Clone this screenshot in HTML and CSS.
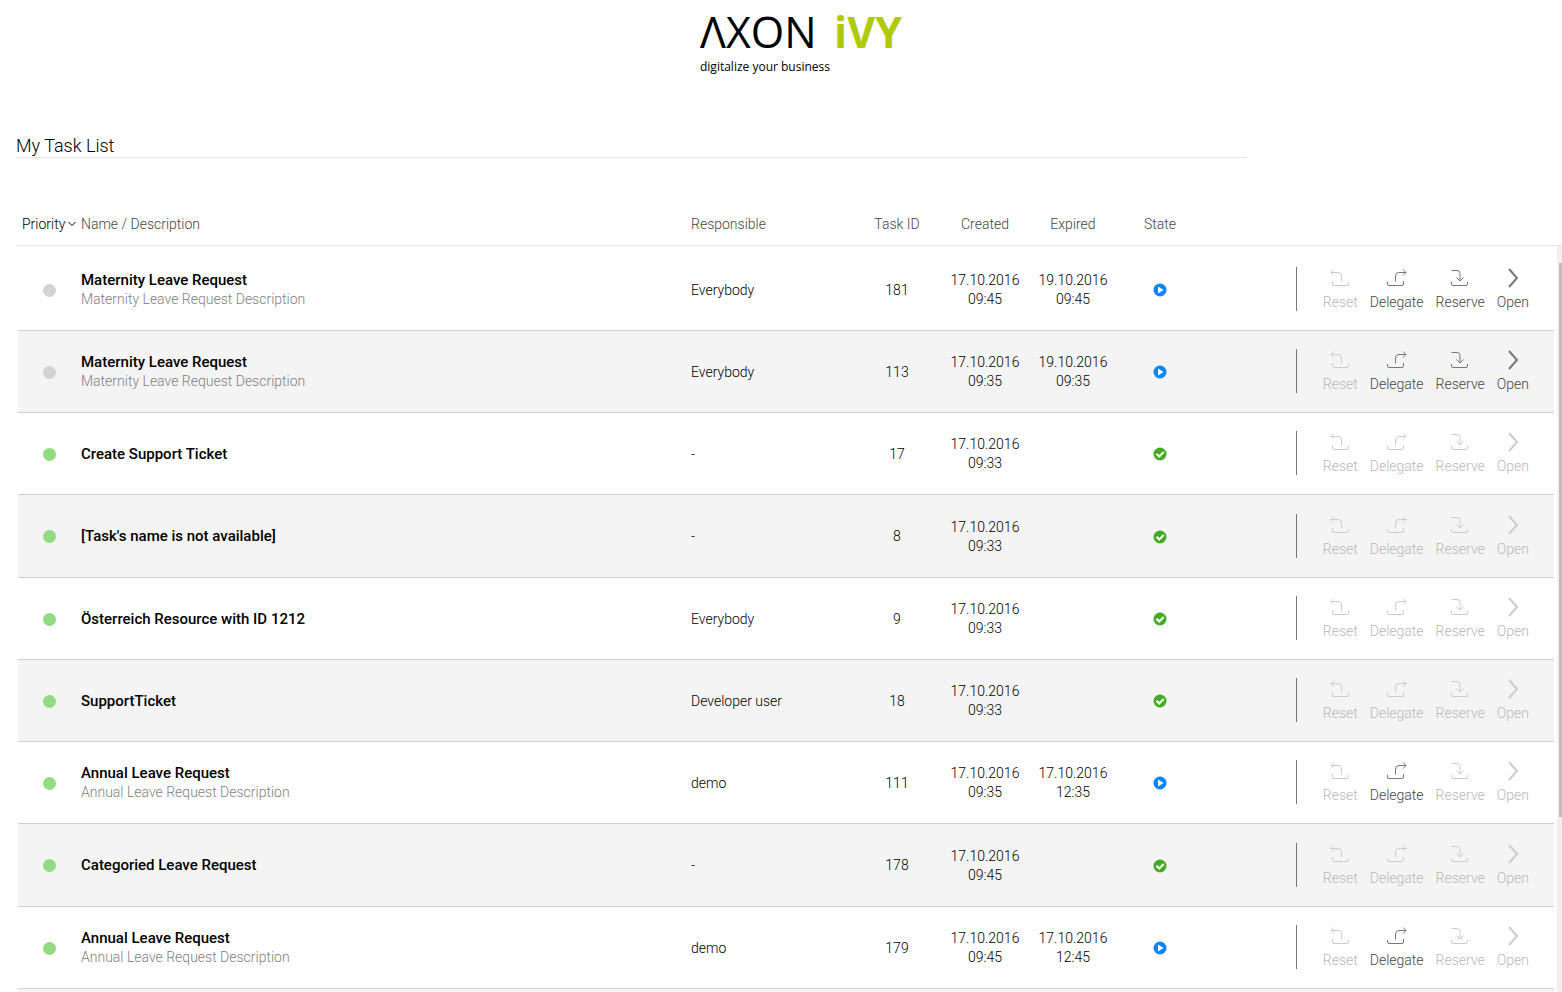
FILE: index.html
```html
<!DOCTYPE html>
<html lang="en">
<head>
<meta charset="utf-8">
<title>My Task List</title>
<link rel="stylesheet" href="styles.css">
</head>
<body>
<svg class="sprite" aria-hidden="true">
  <symbol id="reset" viewBox="0 0 20 20"><path d="M4 1.500 1 4.500l3 3M1 4.500h7q3.500 0 3.500 3.500v5.500M2.500 13v3q0 1.500 1.500 1.500h13q1.500 0 1.500-1.500v-2"/></symbol>
  <symbol id="delegate" viewBox="0 0 20 20"><path d="M16 1.500l3 3-3 3M19 4.500h-7q-3.500 0-3.500 3.500v5.500M.500 14v2q0 1.500 1.500 1.500h13q1.500 0 1.500-1.500v-3"/></symbol>
  <symbol id="reserve" viewBox="0 0 20 20"><path d="M1.500 2.500h5.500q3 0 3 3v7M6.500 9.500l3.500 3.500 3.500-3.500M1.500 14v2q0 1.500 1.500 1.500h13q1.500 0 1.500-1.500v-2"/></symbol>
  <symbol id="open" viewBox="0 0 20 20"><path class="thick" d="M6 1 14 10 6 19"/></symbol>
  <symbol id="running" viewBox="0 0 14 14"><circle cx="7" cy="7" r="6.500" fill="#0a84ff"/><path d="M5 3.500v7L10.500 7z" fill="#fff"/></symbol>
  <symbol id="done" viewBox="0 0 14 14"><circle cx="7" cy="7" r="6.500" fill="#43ab22"/><path d="M3.500 6.800 6.200 9.500 10.700 5" fill="none" stroke="#fff" stroke-width="2.200"/></symbol>
</svg>

<header class="brand">
  <div class="logo">
    <div class="wordmark"><span class="axon">ΛXON</span><span class="ivy">iVY</span></div>
    <div class="tagline">digitalize your business</div>
  </div>
</header>

<main class="page">
  <h1 class="title">My Task List</h1>
  <div class="list">
  <table class="tasks">
    <thead>
      <tr>
        <th class="sorted"><button class="sort">Priority<svg class="caret" viewBox="0 0 8 6"><path d="M.500 1 4 4.500 7.500 1"/></svg></button></th>
        <th>Name / Description</th><th>Responsible</th>
        <th class="center">Task ID</th><th class="center">Created</th><th class="center">Expired</th><th class="center">State</th><th></th>
      </tr>
    </thead>
    <tbody>
      <tr>
        <td class="center"><span class="dot low"></span></td>
        <td><div class="name">Maternity Leave Request</div><div class="desc">Maternity Leave Request Description</div></td>
        <td>Everybody</td><td class="center">181</td><td class="center">17.10.2016<br>09:45</td><td class="center">19.10.2016<br>09:45</td>
        <td class="center"><svg class="state"><use href="#running"/></svg></td>
        <td class="actions"><div class="bar">
          <button disabled><svg><use href="#reset"/></svg>Reset</button>
          <button><svg><use href="#delegate"/></svg>Delegate</button>
          <button><svg><use href="#reserve"/></svg>Reserve</button>
          <button><svg><use href="#open"/></svg>Open</button>
        </div></td>
      </tr>
      <tr>
        <td class="center"><span class="dot low"></span></td>
        <td><div class="name">Maternity Leave Request</div><div class="desc">Maternity Leave Request Description</div></td>
        <td>Everybody</td><td class="center">113</td><td class="center">17.10.2016<br>09:35</td><td class="center">19.10.2016<br>09:35</td>
        <td class="center"><svg class="state"><use href="#running"/></svg></td>
        <td class="actions"><div class="bar">
          <button disabled><svg><use href="#reset"/></svg>Reset</button>
          <button><svg><use href="#delegate"/></svg>Delegate</button>
          <button><svg><use href="#reserve"/></svg>Reserve</button>
          <button><svg><use href="#open"/></svg>Open</button>
        </div></td>
      </tr>
      <tr>
        <td class="center"><span class="dot"></span></td>
        <td><div class="name">Create Support Ticket</div></td>
        <td>-</td><td class="center">17</td><td class="center">17.10.2016<br>09:33</td><td></td>
        <td class="center"><svg class="state"><use href="#done"/></svg></td>
        <td class="actions"><div class="bar">
          <button disabled><svg><use href="#reset"/></svg>Reset</button>
          <button disabled><svg><use href="#delegate"/></svg>Delegate</button>
          <button disabled><svg><use href="#reserve"/></svg>Reserve</button>
          <button disabled><svg><use href="#open"/></svg>Open</button>
        </div></td>
      </tr>
      <tr>
        <td class="center"><span class="dot"></span></td>
        <td><div class="name">[Task's name is not available]</div></td>
        <td>-</td><td class="center">8</td><td class="center">17.10.2016<br>09:33</td><td></td>
        <td class="center"><svg class="state"><use href="#done"/></svg></td>
        <td class="actions"><div class="bar">
          <button disabled><svg><use href="#reset"/></svg>Reset</button>
          <button disabled><svg><use href="#delegate"/></svg>Delegate</button>
          <button disabled><svg><use href="#reserve"/></svg>Reserve</button>
          <button disabled><svg><use href="#open"/></svg>Open</button>
        </div></td>
      </tr>
      <tr>
        <td class="center"><span class="dot"></span></td>
        <td><div class="name">Österreich Resource with ID 1212</div></td>
        <td>Everybody</td><td class="center">9</td><td class="center">17.10.2016<br>09:33</td><td></td>
        <td class="center"><svg class="state"><use href="#done"/></svg></td>
        <td class="actions"><div class="bar">
          <button disabled><svg><use href="#reset"/></svg>Reset</button>
          <button disabled><svg><use href="#delegate"/></svg>Delegate</button>
          <button disabled><svg><use href="#reserve"/></svg>Reserve</button>
          <button disabled><svg><use href="#open"/></svg>Open</button>
        </div></td>
      </tr>
      <tr>
        <td class="center"><span class="dot"></span></td>
        <td><div class="name">SupportTicket</div></td>
        <td>Developer user</td><td class="center">18</td><td class="center">17.10.2016<br>09:33</td><td></td>
        <td class="center"><svg class="state"><use href="#done"/></svg></td>
        <td class="actions"><div class="bar">
          <button disabled><svg><use href="#reset"/></svg>Reset</button>
          <button disabled><svg><use href="#delegate"/></svg>Delegate</button>
          <button disabled><svg><use href="#reserve"/></svg>Reserve</button>
          <button disabled><svg><use href="#open"/></svg>Open</button>
        </div></td>
      </tr>
      <tr>
        <td class="center"><span class="dot"></span></td>
        <td><div class="name">Annual Leave Request</div><div class="desc">Annual Leave Request Description</div></td>
        <td>demo</td><td class="center">111</td><td class="center">17.10.2016<br>09:35</td><td class="center">17.10.2016<br>12:35</td>
        <td class="center"><svg class="state"><use href="#running"/></svg></td>
        <td class="actions"><div class="bar">
          <button disabled><svg><use href="#reset"/></svg>Reset</button>
          <button><svg><use href="#delegate"/></svg>Delegate</button>
          <button disabled><svg><use href="#reserve"/></svg>Reserve</button>
          <button disabled><svg><use href="#open"/></svg>Open</button>
        </div></td>
      </tr>
      <tr>
        <td class="center"><span class="dot"></span></td>
        <td><div class="name">Categoried Leave Request</div></td>
        <td>-</td><td class="center">178</td><td class="center">17.10.2016<br>09:45</td><td></td>
        <td class="center"><svg class="state"><use href="#done"/></svg></td>
        <td class="actions"><div class="bar">
          <button disabled><svg><use href="#reset"/></svg>Reset</button>
          <button disabled><svg><use href="#delegate"/></svg>Delegate</button>
          <button disabled><svg><use href="#reserve"/></svg>Reserve</button>
          <button disabled><svg><use href="#open"/></svg>Open</button>
        </div></td>
      </tr>
      <tr>
        <td class="center"><span class="dot"></span></td>
        <td><div class="name">Annual Leave Request</div><div class="desc">Annual Leave Request Description</div></td>
        <td>demo</td><td class="center">179</td><td class="center">17.10.2016<br>09:45</td><td class="center">17.10.2016<br>12:45</td>
        <td class="center"><svg class="state"><use href="#running"/></svg></td>
        <td class="actions"><div class="bar">
          <button disabled><svg><use href="#reset"/></svg>Reset</button>
          <button><svg><use href="#delegate"/></svg>Delegate</button>
          <button disabled><svg><use href="#reserve"/></svg>Reserve</button>
          <button disabled><svg><use href="#open"/></svg>Open</button>
        </div></td>
      </tr>
      <tr></tr>
    </tbody>
  </table>
  <div class="scrollbar"><div class="thumb"></div></div>
  </div>
</main>
</body>
</html>
```
FILE: styles.css
```css
* { box-sizing: border-box; }

body {
  margin: 0;
  height: 100vh;
  display: flex;
  flex-direction: column;
  overflow: hidden;
  background: #fff;
  color: #000;
  font: 300 14px/19px Roboto, sans-serif;
}

.sprite { display: none; }

.brand {
  display: flex;
  justify-content: center;
  padding: 4px 0 0 40px;
  height: 134px;
}

.logo {
  width: 202px;
  font-family: "Open Sans", sans-serif;
  font-weight: 400;
}

.wordmark {
  display: flex;
  justify-content: space-between;
  font-size: 43px;
  line-height: 56px;
}

.ivy { color: #afca0b; font-weight: 700; }
.tagline { font-size: 12px; line-height: 14px; }

.page {
  flex: 1;
  min-height: 0;
  display: flex;
  flex-direction: column;
  padding-left: 16px;
}

.title {
  margin: 0 316px 0 0;
  border-bottom: 1px solid #e5e5e5;
  font-size: 18px;
  font-weight: 300;
  line-height: 23px;
}

.list {
  position: relative;
  flex: 1;
  min-height: 0;
  margin-top: 45px;
  overflow: hidden;
}

.tasks, .tasks thead, .tasks tbody { display: block; }
.tasks thead { border-bottom: 1px solid #e5e5e5; padding: 0 8px 0 2px; }
.tasks tbody { padding: 3px 8px 0 2px; }

.tasks tr {
  display: grid;
  grid-template-columns: 63px 1fr 162px 88px 88px 88px 86px 351px;
  align-items: center;
}

.tasks thead tr { height: 42px; }
.tasks tbody tr { height: 82px; padding-top: 1px; border-bottom: 1px solid #d0d0d0; }
.tasks tbody tr:nth-child(even) { background: #f4f4f4; }
.tasks tbody tr:nth-child(4n) { height: 83px; }

.tasks th, .tasks td { padding: 0; text-align: left; }
.tasks th { color: #444; font-weight: 300; white-space: nowrap; }
.tasks .center { text-align: center; }
.tasks .sorted { padding-left: 4px; }

button {
  padding: 0;
  border: 0;
  background: none;
  color: inherit;
  font: inherit;
}

.sort { display: flex; align-items: center; gap: 3px; color: #000; }
.caret { width: 8px; height: 6px; fill: none; stroke: #000; }

.name { font-size: 15px; font-weight: 500; }
.desc { color: #808080; }

.dot {
  display: block;
  width: 13px;
  height: 13px;
  margin: 0 auto;
  border-radius: 50%;
  background: #92db80;
}

.dot.low { background: #d3d3d3; }
.state { display: block; width: 14px; height: 14px; margin: 0 auto; }

.tasks .actions { padding-bottom: 2px; }

.bar {
  display: flex;
  gap: 12px;
  width: max-content;
  height: 44px;
  margin-left: auto;
  padding: 1px 25px 0 26px;
  border-left: 1px solid #777;
}

.bar button {
  display: flex;
  flex-direction: column;
  align-items: center;
  gap: 5px;
  color: #444;
  line-height: 18px;
}

.bar button:disabled { color: #b8b8b8; }

.bar svg {
  width: 20px;
  height: 20px;
  fill: none;
  stroke: #777;
}

.bar button:disabled svg { stroke: #ccc; }

.thick { stroke-width: 2; }

.scrollbar {
  position: absolute;
  top: 43px;
  right: 0;
  bottom: 0;
  width: 5px;
  padding: 17px 0 0 2px;
  background: #f0f0f0;
}

.thumb { height: 76%; background: #bebebe; }
```
